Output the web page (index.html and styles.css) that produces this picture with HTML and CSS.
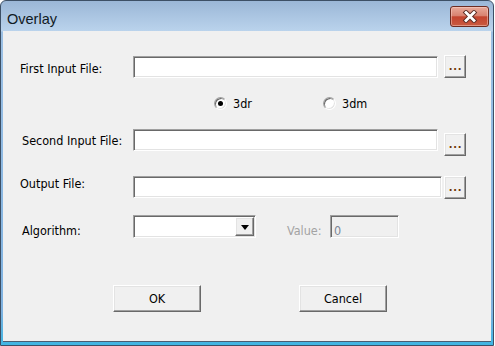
FILE: index.html
```html
<!DOCTYPE html>
<html>
<head>
<meta charset="utf-8">
<title>Overlay</title>
<link rel="stylesheet" href="styles.css">
</head>
<body>
<div class="window">
  <div class="titlebar">
    <span class="title">Overlay</span>
    <div class="close">
      <svg width="18" height="13" viewBox="0 0 18 13">
        <path d="M5 2.5 L13 10.5 M13 2.5 L5 10.5" stroke="#5a2a22" stroke-width="4.6" stroke-linecap="square" fill="none"/>
        <path d="M5 2.5 L13 10.5 M13 2.5 L5 10.5" stroke="#ffffff" stroke-width="2.8" stroke-linecap="square" fill="none"/>
      </svg>
    </div>
  </div>
  <div class="client">
    <div class="row row-first">
      <div class="label label-a pad-6">First Input File:</div>
      <div class="textbox tb-file tb-first"></div>
      <div class="btn browse">...</div>
    </div>
    <div class="row radios">
      <div class="radio-item radio-first"><span class="radio checked"></span><span class="radio-text">3dr</span></div>
      <div class="radio-item"><span class="radio"></span><span class="radio-text">3dm</span></div>
    </div>
    <div class="row row-second">
      <div class="label label-b pad-4">Second Input File:</div>
      <div class="textbox tb-file"></div>
      <div class="btn browse browse-low">...</div>
    </div>
    <div class="row row-output">
      <div class="label label-a">Output File:</div>
      <div class="textbox tb-out"></div>
      <div class="btn browse browse-near">...</div>
    </div>
    <div class="row row-algo">
      <div class="label label-b pad-8">Algorithm:</div>
      <div class="textbox combo"><div class="btn drop"><span class="arrow"></span></div></div>
      <div class="label value-label pad-8">Value:</div>
      <div class="textbox value-box">0</div>
    </div>
    <div class="row row-buttons">
      <div class="btn push ok">OK</div>
      <div class="btn push cancel">Cancel</div>
    </div>
  </div>
</div>
</body>
</html>
```
FILE: styles.css
```css
body {
  margin: 0;
  background: #ffffff;
  font-family: "DejaVu Sans Condensed", "DejaVu Sans", sans-serif;
  font-size: 12.5px;
  color: #000000;
}

.window {
  width: 494px;
  height: 346px;
  box-sizing: border-box;
  border: 1px solid #3d5066;
  border-radius: 6px 6px 0 0;
  background: linear-gradient(#9bb7d7 0, #bad3ec 30px, #9cc0e4 31px, #7fb2e0 310px, #3fb5e3 100%);
  display: flex;
  flex-direction: column;
  overflow: hidden;
}

.titlebar {
  height: 30px;
  flex: none;
  display: flex;
  justify-content: space-between;
  align-items: flex-start;
  padding: 0 4px 0 6px;
  box-sizing: border-box;
}

.title {
  font-family: "Liberation Sans", Arial, sans-serif;
  font-size: 14.5px;
  line-height: 17px;
  margin-top: 10px;
  color: #111a24;
}

.close {
  width: 39px;
  height: 21px;
  margin-top: 5px;
  box-sizing: border-box;
  border: 1px solid #6d2c22;
  border-radius: 3px;
  background: linear-gradient(#e9aa9a 0%, #d98371 45%, #c4442f 52%, #c95a40 100%);
  box-shadow: inset 0 0 0 1px rgba(255, 220, 210, 0.45);
  display: flex;
  align-items: center;
  justify-content: center;
}

.close svg {
  display: block;
}

.client {
  flex: 1;
  margin: 0 2px 4px 2px;
  background: #f0f0f0;
  padding-top: 24px;
  box-sizing: border-box;
  box-shadow: 0 1px 0 #4a5d72;
}

.row {
  display: flex;
  align-items: flex-start;
}

.label {
  flex: none;
  line-height: 15px;
  white-space: nowrap;
  box-sizing: border-box;
}

.label-a {
  margin-left: 17px;
  width: 113px;
}

.label-b {
  margin-left: 19px;
  width: 111px;
}

.pad-4 { padding-top: 4px; }
.pad-6 { padding-top: 6px; }
.pad-8 { padding-top: 8px; }

.textbox {
  flex: none;
  box-sizing: border-box;
  background: #ffffff;
  border: 1px solid;
  border-color: #a0a0a0 #ffffff #ffffff #a0a0a0;
  box-shadow: inset 1px 1px 0 #696969, inset -1px -1px 0 #e3e3e3;
}

.tb-file {
  width: 305px;
  height: 22px;
}

.tb-first {
  margin-top: 1px;
}

.tb-out {
  width: 309px;
  height: 22px;
}

.btn {
  flex: none;
  box-sizing: border-box;
  background: #f0f0f0;
  border: 1px solid;
  border-color: #ffffff #696969 #696969 #ffffff;
  box-shadow: inset -1px -1px 0 #a0a0a0, inset 1px 1px 0 #e3e3e3;
  display: flex;
  align-items: center;
  justify-content: center;
}

.browse {
  width: 22px;
  height: 23px;
  margin-left: 6px;
  color: #6e3808;
  font-size: 11px;
  font-weight: bold;
  letter-spacing: 0.8px;
  padding-left: 1px;
}

.browse-low {
  margin-top: 4px;
}

.browse-near {
  margin-left: 2px;
}

.radios {
  margin-top: 19px;
  padding-left: 211px;
}

.radio-item {
  display: flex;
  align-items: flex-start;
  gap: 6px;
  line-height: 13px;
}

.radio-first {
  width: 109px;
}

.radio {
  width: 13px;
  height: 13px;
  box-sizing: border-box;
  border-radius: 50%;
  border: 1px solid;
  border-color: #a0a0a0 #ffffff #ffffff #a0a0a0;
  background: #ffffff;
  box-shadow: inset 1px 1px 0 #696969, inset -1px -1px 0 #e3e3e3;
  display: flex;
  align-items: center;
  justify-content: center;
}

.radio.checked::after {
  content: "";
  width: 5px;
  height: 5px;
  border-radius: 50%;
  background: #000000;
}

.row-second {
  margin-top: 19px;
}

.row-output {
  margin-top: 20px;
}

.row-algo {
  margin-top: 16px;
}

.combo {
  width: 123px;
  height: 23px;
  padding: 1px;
  display: flex;
  justify-content: flex-end;
}

.drop {
  width: 19px;
  height: 19px;
}

.arrow {
  width: 0;
  height: 0;
  border-left: 4px solid transparent;
  border-right: 4px solid transparent;
  border-top: 5px solid #000000;
  margin-top: 1px;
}

.value-label {
  margin-left: 31px;
  width: 43px;
  color: #a3a3a3;
}

.value-box {
  width: 69px;
  height: 23px;
  background: #f0f0f0;
  padding: 7px 0 0 3px;
  line-height: 15px;
  color: #7d8796;
}

.row-buttons {
  margin-top: 47px;
}

.push {
  width: 88px;
  height: 27px;
}

.ok {
  margin-left: 110px;
}

.cancel {
  margin-left: 98px;
}
```
